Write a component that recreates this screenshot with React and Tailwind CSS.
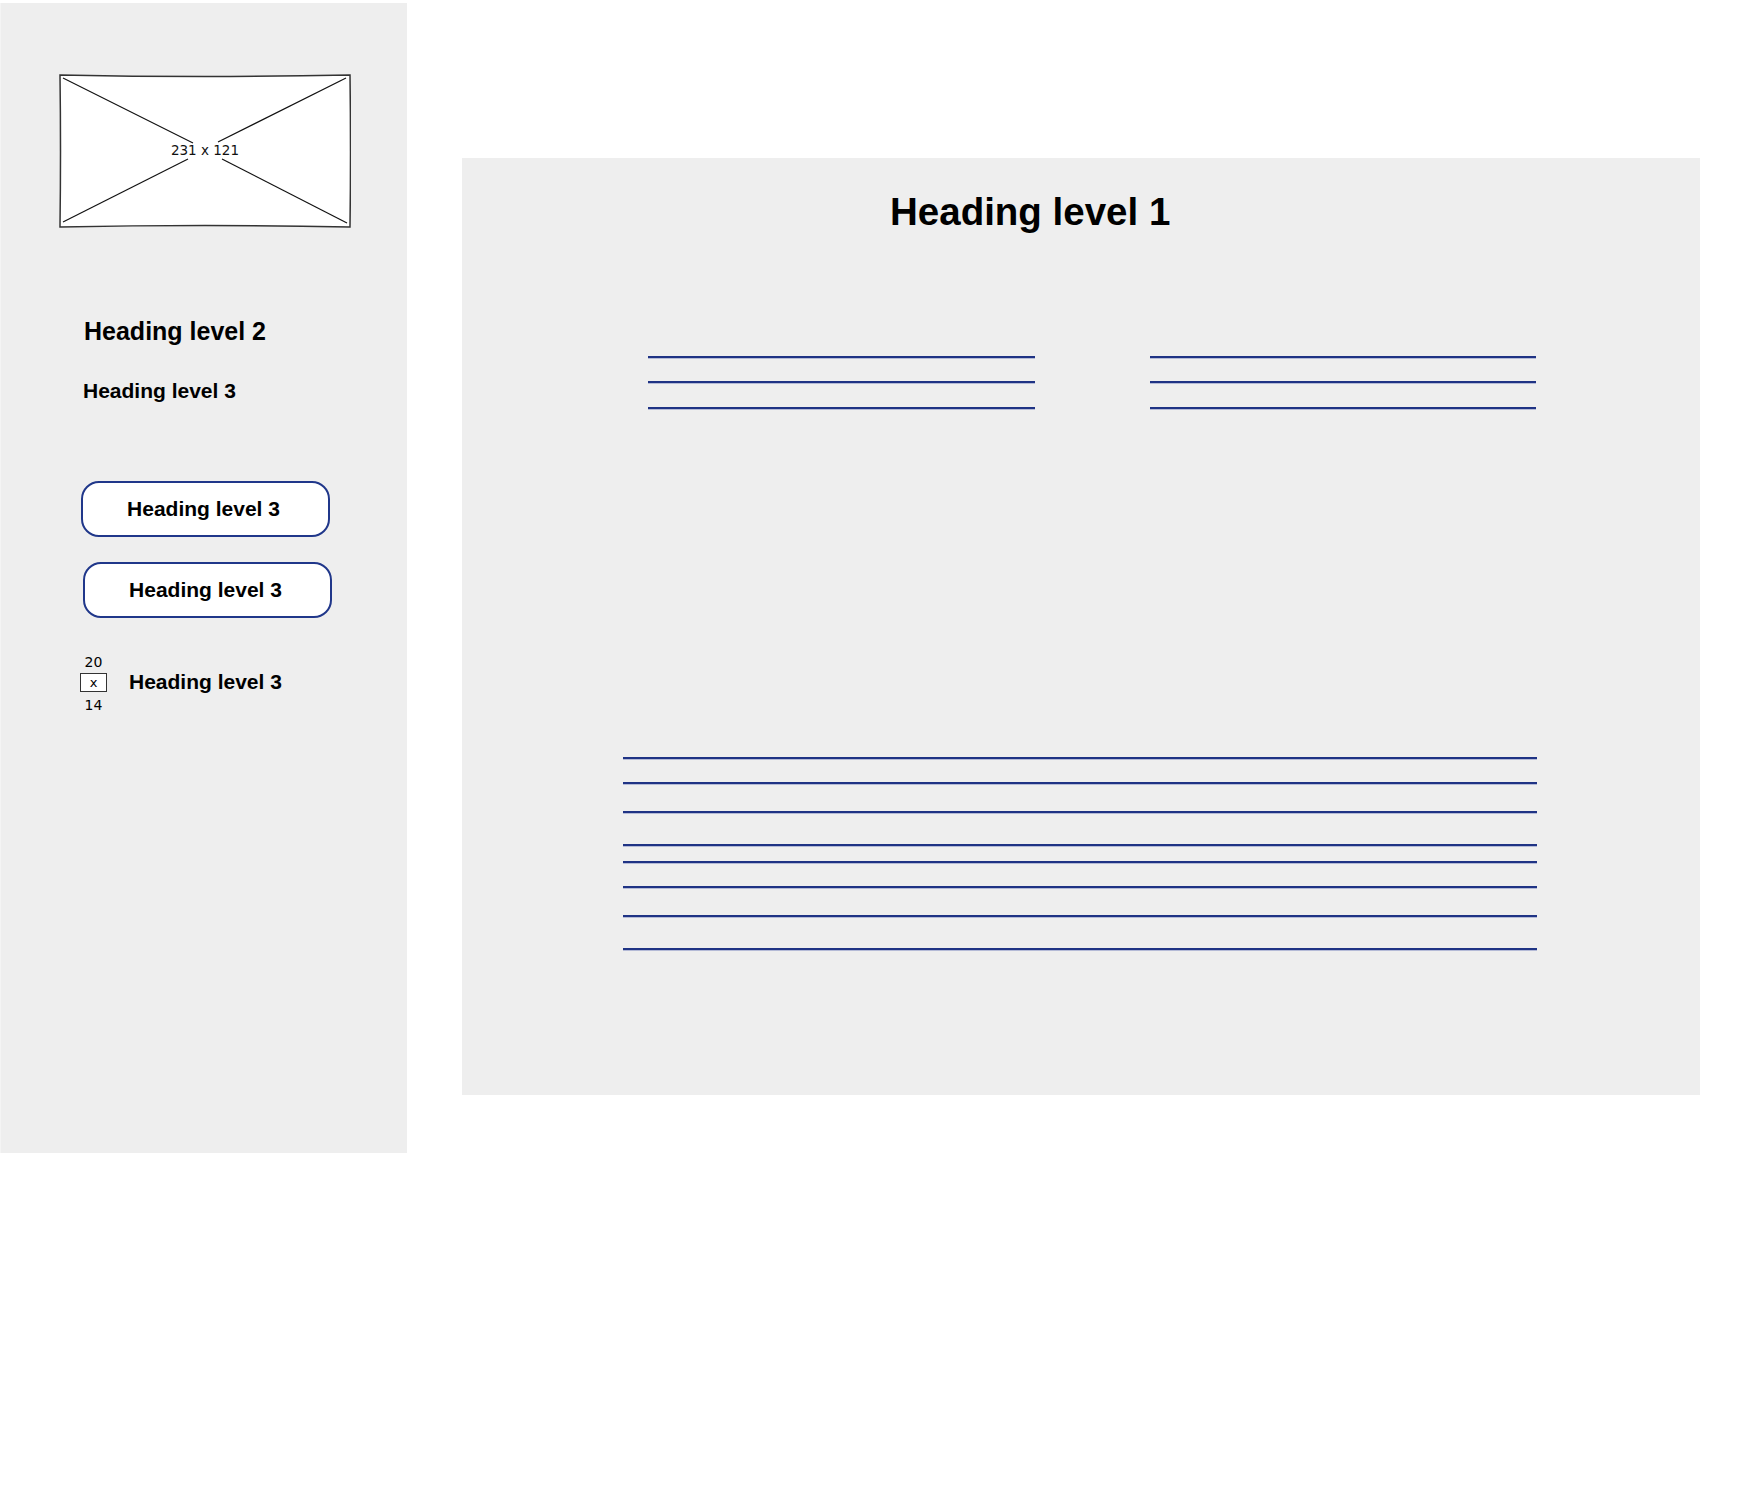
import React from 'react';

const font = { fontFamily: '"Liberation Sans", Arial, sans-serif' };
const smallFont = { fontFamily: '"DejaVu Sans", sans-serif' };

function Placeholder() {
  return (
    <svg width="292" height="155" viewBox="0 0 292 155" className="block">
      <path d="M1 1 Q146 4 291 1 Q292 77 291 153 Q146 150 1 153 Q2 77 1 1 Z" fill="#ffffff" stroke="#333333" strokeWidth="1.5" />
      <line x1="4" y1="4" x2="134" y2="69" stroke="#111111" strokeWidth="1.2" />
      <line x1="287" y1="4" x2="159" y2="68" stroke="#111111" strokeWidth="1.2" />
      <line x1="4" y1="148" x2="129" y2="85" stroke="#111111" strokeWidth="1.2" />
      <line x1="288" y1="149" x2="163" y2="85" stroke="#111111" strokeWidth="1.2" />
      <text x="146" y="81" textAnchor="middle" fontSize="13.5" fill="#111111" style={smallFont}>231 x 121</text>
    </svg>
  );
}

function Line({ className = '' }) {
  return <div className={`h-[2px] bg-[#1f3384] shadow-[0_1px_0_#b4bad6] ${className}`} />;
}

function PillButton({ children, className = '' }) {
  return (
    <button className={`flex h-[56px] w-[249px] items-center justify-center rounded-[18px] border-2 border-[#20378a] bg-white pr-[4px] text-[21px] font-bold text-black ${className}`}>
      {children}
    </button>
  );
}

export default function App() {
  return (
    <div className="flex min-h-[1500px] w-[1750px] items-start bg-white text-black" style={font}>
      {/* sidebar */}
      <aside className="mt-[3px] flex h-[1150px] w-[407px] flex-col border-l border-[#f4f4f4] bg-[#eeeeee]">
        <div className="ml-[58px] mt-[71px]">
          <Placeholder />
        </div>
        <h2 className="ml-[83px] mt-[88px] text-[25px] font-bold leading-[28px]">Heading level 2</h2>
        <h3 className="ml-[82px] mt-[34px] text-[21px] font-bold leading-[24px]">Heading level 3</h3>
        <PillButton className="ml-[80px] mt-[78px]">Heading level 3</PillButton>
        <PillButton className="ml-[82px] mt-[25px] h-[55px]">Heading level 3</PillButton>
        <div className="ml-[79px] mt-[35px] flex items-start">
          <div className="flex w-[27px] flex-col items-center text-[14px]" style={smallFont}>
            <span className="leading-[18px]">20</span>
            <div className="mt-[2px] flex h-[19px] w-[27px] items-end justify-center border border-[#333333] bg-white text-[13px] leading-[16px]">x</div>
            <span className="mt-[4px] leading-[18px]">14</span>
          </div>
          <span className="ml-[22px] mt-[17px] text-[21px] font-bold leading-[24px]">Heading level 3</span>
        </div>
      </aside>

      {/* main panel */}
      <main className="ml-[55px] mt-[158px] flex h-[937px] w-[1238px] flex-col bg-[#eeeeee]">
        <h1 className="ml-[428px] mt-[32px] text-[38.5px] font-bold leading-[44px]">Heading level 1</h1>
        <div className="ml-[186px] mt-[122px] flex gap-[115px]">
          <div className="flex w-[387px] flex-col">
            <Line />
            <Line className="mt-[23px]" />
            <Line className="mt-[24px]" />
          </div>
          <div className="flex w-[386px] flex-col">
            <Line />
            <Line className="mt-[23px]" />
            <Line className="mt-[24px]" />
          </div>
        </div>
        <div className="ml-[161px] mt-[348px] flex w-[914px] flex-col">
          <Line />
          <Line className="mt-[23px]" />
          <Line className="mt-[27px]" />
          <Line className="mt-[31px]" />
          <Line className="mt-[15px]" />
          <Line className="mt-[23px]" />
          <Line className="mt-[27px]" />
          <Line className="mt-[31px]" />
        </div>
      </main>
    </div>
  );
}
